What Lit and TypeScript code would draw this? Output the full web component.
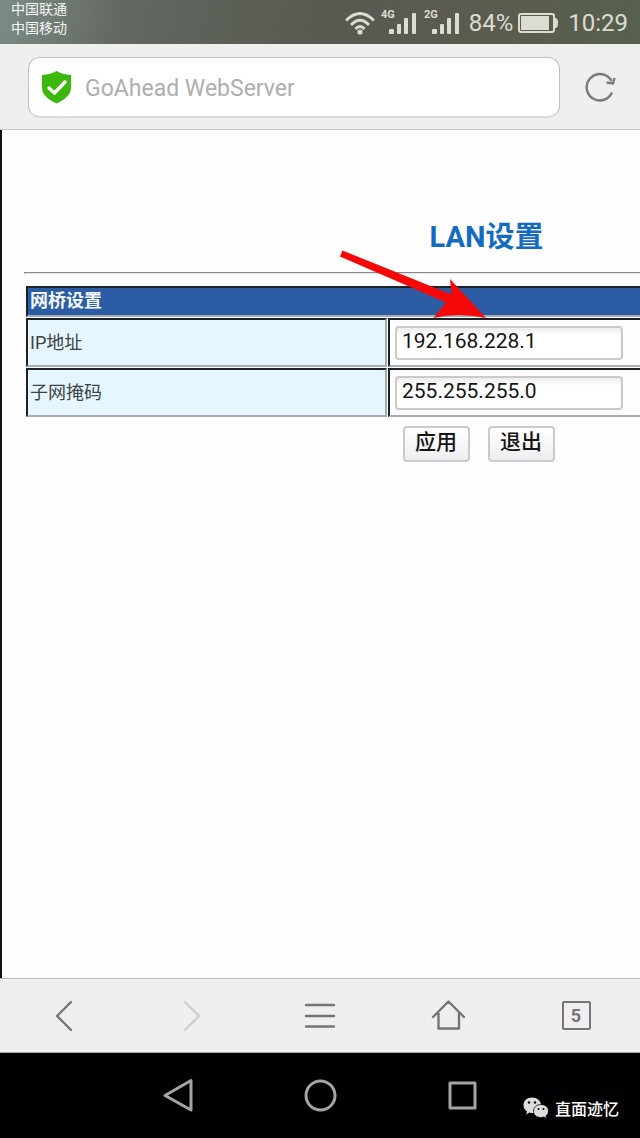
import { LitElement, html, css, svg } from "lit";
import { customElement, property } from "lit/decorators.js";

@customElement("status-bar")
class StatusBar extends LitElement {
  static styles = css`
    :host {
      display: flex;
      justify-content: space-between;
      box-sizing: border-box;
      height: 44px;
      padding: 0 12px 0 11px;
      color: #dcdcd2;
      background: linear-gradient(100deg, #7b8c85 0, #62675f 20%, #565a51 50%, #5b5b50 72%, #56604d 100%);
      font-family: Roboto, "Noto Sans CJK SC", sans-serif;
    }
    .carriers {
      color: #f4f6f4;
      font-size: 14px;
      line-height: 19px;
    }
    .right {
      display: flex;
      align-items: center;
      padding-top: 1px;
      font-size: 24px;
      line-height: 48px;
    }
    .wifi { margin-right: 6px; }
    .signal { margin-right: 6px; }
    .percent { margin: 0 5px 0 2px; }
    .battery { margin-right: 10px; }
    svg { display: block; }
    .tag { font: bold 11px Roboto, sans-serif; }
  `;

  private signal(tag: string) {
    return html`<svg class="signal" width="37" height="30" viewBox="0 0 37 30" fill="#dcdcd2">
      ${svg`<text class="tag" x="0" y="10">${tag}</text>`}
      <rect x="8" y="21" width="5" height="5" rx="1" />
      <rect x="16" y="16" width="4" height="10" rx="1" />
      <rect x="23" y="10" width="4" height="16" rx="1" />
      <rect x="31" y="5" width="4" height="21" rx="1" />
    </svg>`;
  }

  render() {
    return html`
      <div class="carriers"><div>中国联通</div><div>中国移动</div></div>
      <div class="right">
        <svg class="wifi" width="30" height="24" viewBox="0 0 30 24" fill="none" stroke="#dcdcd2" stroke-width="3">
          <path d="M1 9.5Q15-4.500 29 9.500M6 14Q15 4.500 24 14M10.500 18Q15 13 19.500 18" />
          <circle cx="15" cy="21" r="2.600" fill="#dcdcd2" stroke="none" />
        </svg>
        ${this.signal("4G")} ${this.signal("2G")}
        <span class="percent">84%</span>
        <svg class="battery" width="40" height="20" viewBox="0 0 40 20">
          <rect x="1" y="1" width="35" height="18" rx="2" fill="none" stroke="#dcdcd2" stroke-width="2" />
          <rect x="3" y="3" width="28" height="14" fill="#dcdcd2" />
          <path d="M37 5h1q2 1 2 5t-2 5h-1z" fill="#dcdcd2" />
        </svg>
        <span>10:29</span>
      </div>
    `;
  }
}

@customElement("address-bar")
class AddressBar extends LitElement {
  @property() text = "";
  static styles = css`
    :host {
      display: flex;
      align-items: center;
      gap: 22px;
      box-sizing: border-box;
      height: 86px;
      padding: 2px 22px 0 28px;
      background: linear-gradient(#eef0ec, #f0eef0 60%);
      border-bottom: 1px solid #c4c2c4;
    }
    .field {
      display: flex;
      flex: 1;
      align-items: center;
      gap: 13px;
      box-sizing: border-box;
      height: 61px;
      padding: 0 12px;
      background: #fff;
      border: 1px solid #bfbfbf;
      border-bottom: 2px solid #dadada;
      border-radius: 12px;
    }
    .url {
      flex: 1;
      min-width: 0;
      padding: 3px 0 0;
      border: 0;
      outline: 0;
      background: none;
      font: 23px/30px Roboto, sans-serif;
      color: #aeaeae;
    }
    .reload { padding: 0; border: 0; background: none; }
    svg { display: block; }
  `;
  render() {
    return html`
      <div class="field">
        <svg width="31" height="34" viewBox="0 0 31 34">
          <path d="M15.500 1Q21 4.500 30 5V18Q30 27 15.500 33.500Q1 27 1 18V5Q10 4.500 15.500 1Z" fill="#3cb80c" />
          <path d="M8 18l5.500 5L24 12" fill="none" stroke="#fff" stroke-width="3.400" stroke-linecap="round" stroke-linejoin="round" />
        </svg>
        <input class="url" aria-label="Address" .value=${this.text} />
      </div>
      <button class="reload" aria-label="Reload">
        <svg width="36" height="36" viewBox="0 0 36 36" fill="none" stroke="#7b7b7b" stroke-width="2.400">
          <path d="M30 22.500A13.200 13.200 0 1 1 29.500 11" />
          <path d="M32.500 8L31 13.500L24.500 12.500" />
        </svg>
      </button>
    `;
  }
}

@customElement("lan-page")
class LanPage extends LitElement {
  static styles = css`
    :host {
      display: block;
      position: relative;
      overflow: hidden;
      background: #fdfdfd;
      border-left: 2px solid #111;
      font-family: Roboto, "Noto Sans CJK SC", sans-serif;
    }
    .sheet { width: 145%; padding: 88px 0 0 22px; }
    h1 {
      margin: 0;
      text-align: center;
      font-size: 29px;
      line-height: 38px;
      color: #146bc2;
    }
    hr {
      margin: 16px 0 11px;
      border: 1px solid;
      border-color: #8a868c #e4e4e4 #e4e4e4 #8a868c;
    }
    table {
      width: 100%;
      padding: 0 1px;
      border-collapse: separate;
      border-spacing: 1px;
      table-layout: fixed;
      font-size: 18px;
    }
    .name { width: 361px; }
    th, td {
      box-sizing: border-box;
      padding: 0 2px;
      text-align: left;
      border: 2px solid;
      border-color: #1d2226 #a5adb3 #a5adb3 #1d2226;
    }
    th {
      height: 31px;
      padding-bottom: 1px;
      line-height: 26px;
      color: #f2f7ff;
      background: #2c5ca3;
    }
    td { height: 49px; color: #3c4245; }
    .key { padding-bottom: 4px; background: #e6f6fe; }
    .value { padding: 0 5px; }
    .ip {
      display: block;
      box-sizing: border-box;
      width: 228px;
      height: 34px;
      margin: 0;
      padding: 0 5px 4px;
      border: 2px solid #cacaca;
      border-radius: 4px;
      background: linear-gradient(#ededed, #fff 8px);
      font: 21px/28px Roboto, sans-serif;
      color: #151515;
    }
    .actions {
      display: flex;
      justify-content: center;
      gap: 18px;
      padding: 8px 16px 0 0;
    }
    .action {
      box-sizing: border-box;
      width: 67px;
      height: 36px;
      padding: 0 0 4px;
      border: 2px solid #cac9cc;
      border-radius: 4px;
      background: linear-gradient(#fff, #eeedf0);
      font: 500 21px/28px Roboto, "Noto Sans CJK SC", sans-serif;
      color: #151515;
    }
    .arrow { position: absolute; left: 338px; top: 120px; pointer-events: none; }
  `;
  render() {
    return html`
      <div class="sheet">
        <h1>LAN设置</h1>
        <hr />
        <table>
          <colgroup><col class="name" /><col /></colgroup>
          <tr><th colspan="2">网桥设置</th></tr>
          <tr>
            <td class="key"><label for="ip">IP地址</label></td>
            <td class="value"><input class="ip" id="ip" value="192.168.228.1" /></td>
          </tr>
          <tr>
            <td class="key"><label for="mask">子网掩码</label></td>
            <td class="value"><input class="ip" id="mask" value="255.255.255.0" /></td>
          </tr>
        </table>
        <div class="actions">
          <button class="action">应用</button>
          <button class="action">退出</button>
        </div>
      </div>
      <svg class="arrow" width="148" height="70" viewBox="0 0 148 70">
        <path d="M2.500 0.500L111.500 44.500L110 29L146 68Q118 62 93.500 68L106 52.500L0 6.500Z" fill="#f60808" />
      </svg>
    `;
  }
}

@customElement("browser-toolbar")
class BrowserToolbar extends LitElement {
  static styles = css`
    :host {
      display: grid;
      grid-template-columns: repeat(5, 1fr);
      box-sizing: border-box;
      height: 75px;
      background: #f0eef1;
      border-top: 1px solid #bdbbbf;
      border-bottom: 1px solid #a8a6aa;
    }
    .tool {
      display: flex;
      align-items: center;
      justify-content: center;
      padding: 0;
      border: 0;
      background: none;
      color: #777478;
    }
    .off { color: #cfcdd0; }
    .tabs {
      box-sizing: border-box;
      width: 29px;
      height: 29px;
      border: 2px solid #777478;
      border-radius: 2px;
      font: bold 18px/26px Roboto, sans-serif;
    }
    svg {
      display: block;
      fill: none;
      stroke: currentColor;
      stroke-width: 2.400;
      stroke-linecap: round;
      stroke-linejoin: round;
    }
  `;
  render() {
    return html`
      <button class="tool" aria-label="Back"><svg width="34" height="34" viewBox="0 0 34 34"><path d="M24 3L10 17L24 31" /></svg></button>
      <button class="tool off" aria-label="Forward" disabled><svg width="34" height="34" viewBox="0 0 34 34"><path d="M10 3L24 17L10 31" /></svg></button>
      <button class="tool" aria-label="Menu"><svg width="34" height="34" viewBox="0 0 34 34"><path d="M3 6H31M3 17H31M3 27.500H31" /></svg></button>
      <button class="tool" aria-label="Home"><svg width="34" height="34" viewBox="0 0 34 34"><path d="M2 18L17.500 2.500L33 18M7.500 14V29.500H28V14" /></svg></button>
      <button class="tool" aria-label="Tabs"><span class="tabs">5</span></button>
    `;
  }
}

@customElement("system-nav")
class SystemNav extends LitElement {
  static styles = css`
    :host {
      display: flex;
      justify-content: center;
      align-items: center;
      gap: 106px;
      position: relative;
      height: 85px;
      background: #020003;
    }
    .key { padding: 0; border: 0; background: none; }
    .key svg { display: block; fill: none; stroke: #a5a3a6; stroke-width: 3; stroke-linejoin: round; }
    .mark {
      position: absolute;
      right: 21px;
      bottom: 18px;
      display: flex;
      align-items: center;
      gap: 6px;
      color: #fff;
      font: 500 16px/24px "Noto Sans CJK SC", sans-serif;
    }
  `;
  render() {
    return html`
      <button class="key" aria-label="Back"><svg width="36" height="36" viewBox="0 0 36 36"><path d="M31 2.500V32L5 17.500Z" /></svg></button>
      <button class="key" aria-label="Home"><svg width="36" height="36" viewBox="0 0 36 36"><circle cx="18.500" cy="17.500" r="14.500" /></svg></button>
      <button class="key" aria-label="Recent apps"><svg width="36" height="36" viewBox="0 0 36 36"><rect x="6" y="5" width="25" height="25" /></svg></button>
      <div class="mark">
        <svg width="26" height="22" viewBox="0 0 26 22">
          <path d="M9 0.500C4 0.500 0.500 4 0.500 8Q0.500 12 4 14.500L3 17.500L6.500 15.500Q8 16 10 16C15 16 18 12 18 8S14 0.500 9 0.500Z" fill="#dedede" />
          <path d="M18 7.500C13.500 7.500 10.500 10.500 10.500 14.200S13.500 20.500 18 20.500Q20 20.500 21 20L24 21.500L23 19Q25.500 17 25.500 14C25.500 10.500 22.500 7.500 18 7.500Z" fill="#dedede" stroke="#020003" stroke-width="0.800" />
          <g fill="#020003"><circle cx="6" cy="5.500" r="1.200" /><circle cx="12" cy="5.500" r="1.200" /><circle cx="15.500" cy="12" r="1" /><circle cx="20.500" cy="12" r="1" /></g>
        </svg>
        <span>直面迹忆</span>
      </div>
    `;
  }
}

@customElement("app-root")
class AppRoot extends LitElement {
  static styles = css`
    :host { display: flex; flex-direction: column; min-height: 100vh; }
    .page { flex: 1; }
  `;
  render() {
    return html`
      <status-bar></status-bar>
      <address-bar text="GoAhead WebServer"></address-bar>
      <lan-page class="page"></lan-page>
      <browser-toolbar></browser-toolbar>
      <system-nav></system-nav>
    `;
  }
}
